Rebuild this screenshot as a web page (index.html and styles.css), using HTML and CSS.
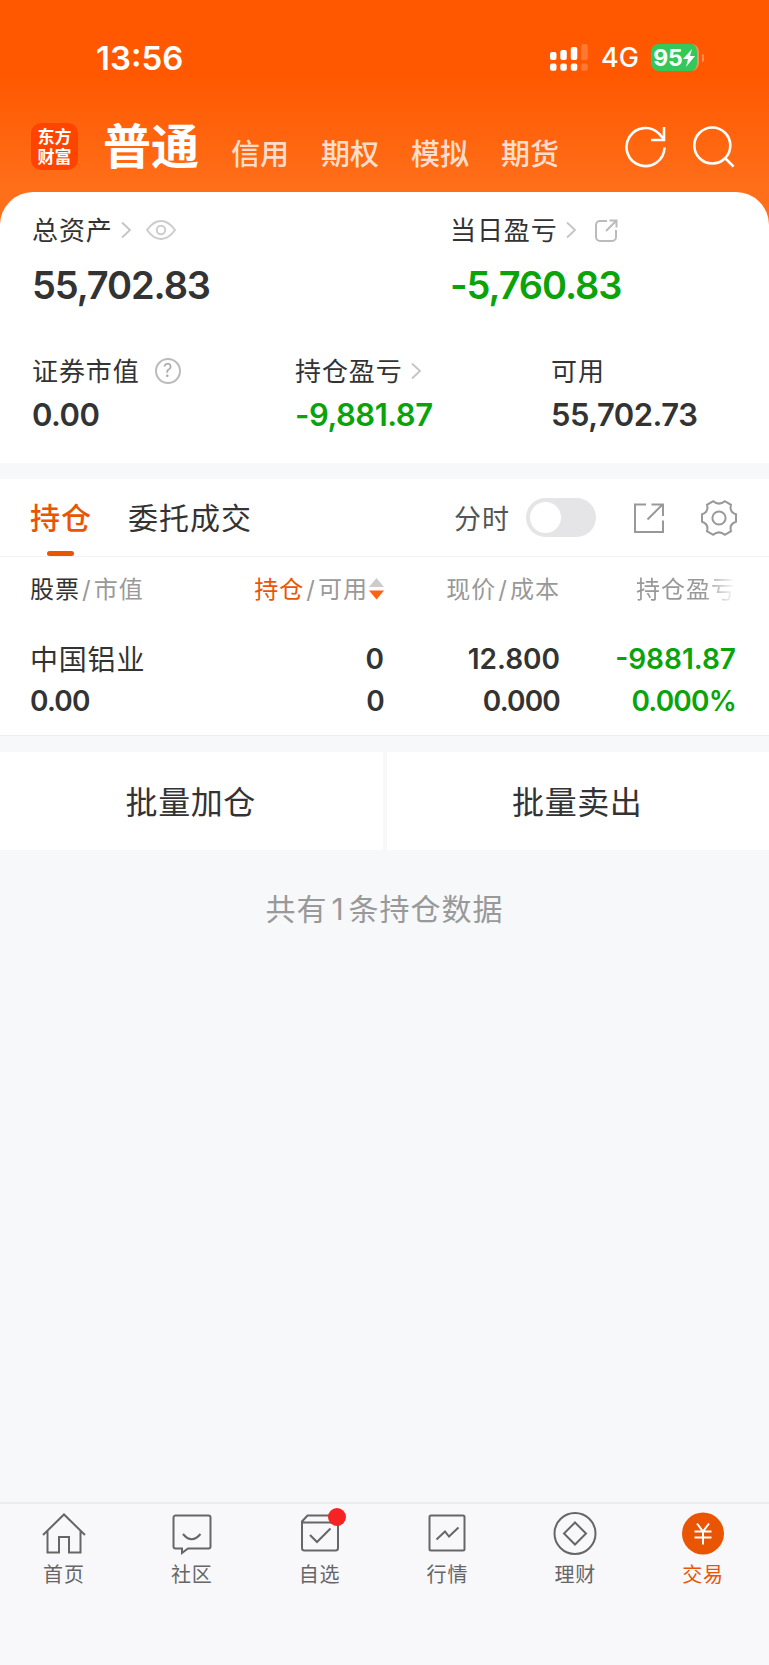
FILE: index.html
```html
<!DOCTYPE html>
<html lang="zh-CN">
<head>
  <meta charset="UTF-8" />
  <meta name="viewport" content="width=device-width, initial-scale=1.0" />
  <title>东方财富 - 交易</title>
  <link rel="stylesheet" href="styles.css">
</head>
<body>
  <header>
    <div class="status-bar">
      <span class="time">13:56</span>
      <div class="status-right">
        <svg class="signal" width="38" height="28" viewBox="0 0 38 28">
          <rect x="0" y="8" width="6.5" height="8" rx="2"/>
          <rect x="10.3" y="6" width="6.5" height="10" rx="2"/>
          <rect x="20.8" y="3" width="6.5" height="13" rx="2"/>
          <rect x="0" y="19.5" width="6.5" height="7.2" rx="2"/>
          <rect x="10.3" y="19.5" width="6.5" height="7.2" rx="2"/>
          <rect x="20.8" y="19.5" width="6.5" height="7.2" rx="2"/>
          <g opacity=".2">
            <rect x="31.2" y="0" width="6.5" height="16" rx="2"/>
            <rect x="31.2" y="19.5" width="6.5" height="7.2" rx="2"/>
          </g>
        </svg>
        <span class="network">4G</span>
        <div class="battery">
          <span>95</span>
          <svg width="12" height="18" viewBox="0 0 12 18"><path d="M9 0L0 10h5L3 18l9-11H7z" fill="#fff"/></svg>
        </div>
        <i class="battery-tip"></i>
      </div>
    </div>
    <div class="title-bar">
      <div class="logo"><span>东方</span><span>财富</span></div>
      <h1>普通</h1>
      <nav class="accounts">
        <a>信用</a>
        <a>期权</a>
        <a>模拟</a>
        <a>期货</a>
      </nav>
      <svg class="refresh" width="42" height="42" viewBox="0 0 42 42" stroke="#fff" stroke-width="2.6">
        <path d="M39.500 21.500A19 19 0 1 1 34.500 8.200L39 13.500"/>
        <path d="M39 1v13H26"/>
      </svg>
      <svg class="search" width="42" height="42" viewBox="0 0 42 42" stroke="#fff" stroke-width="2.6">
        <circle cx="19.300" cy="19.500" r="18"/>
        <path d="M32 32l8.600 8.600"/>
      </svg>
    </div>
  </header>

  <section class="assets">
    <div class="totals">
      <div class="item">
        <div class="label"><span>总资产</span>
          <svg class="arrow" width="11" height="18" viewBox="0 0 11 18"><path d="M1 1.500l8 7.500-8 7.500"/></svg>
          <svg class="eye" width="30" height="20" viewBox="0 0 30 20"><path d="M1 10C6 3 11 1 15 1s9 2 14 9c-5 7-10 9-14 9S6 17 1 10z"/><circle cx="15" cy="10" r="4.200"/></svg>
        </div>
        <div class="value">55,702.83</div>
      </div>
      <div class="item">
        <div class="label"><span>当日盈亏</span>
          <svg class="arrow" width="11" height="18" viewBox="0 0 11 18"><path d="M1 1.500l8 7.500-8 7.500"/></svg>
          <svg class="share" width="23" height="23" viewBox="0 0 23 23"><path d="M12 2H5a4 4 0 0 0-4 4v12a4 4 0 0 0 4 4h12a4 4 0 0 0 4-4v-7M11 12L21 2M14.500 1.500h7v7"/></svg>
        </div>
        <div class="value green">-5,760.83</div>
      </div>
    </div>
    <div class="details">
      <div class="item">
        <div class="label"><span>证券市值</span>
          <i class="help">?</i>
        </div>
        <div class="value">0.00</div>
      </div>
      <div class="item">
        <div class="label"><span>持仓盈亏</span>
          <svg class="arrow" width="11" height="18" viewBox="0 0 11 18"><path d="M1 1.500l8 7.500-8 7.500"/></svg>
        </div>
        <div class="value green">-9,881.87</div>
      </div>
      <div class="item">
        <div class="label"><span>可用</span></div>
        <div class="value">55,702.73</div>
      </div>
    </div>
  </section>

  <section class="positions">
    <div class="tabs">
      <a class="tab active">持仓</a>
      <a class="tab">委托成交</a>
      <span class="minute">分时</span>
      <span class="switch"></span>
      <svg class="export" width="30" height="30" viewBox="0 0 30 30"><path d="M12 1.500H1V29h28V17.500M13.500 16.500L28.500 1.500M17.500 1.500H29V13"/></svg>
      <svg class="gear" width="36" height="36" viewBox="0 0 36 36"><path d="M12.200 1.200Q18 6 23.800 1.200L30 4.800Q28 12 35 14.200V21.800Q28 24 30 31.200L23.800 34.800Q18 30 12.200 34.800L6 31.200Q8 24 1 21.800V14.200Q8 12 6 4.800Z"/><circle cx="18" cy="18" r="6.600"/></svg>
    </div>
    <div class="row head">
      <div><b>股票</b><i>/</i>市值</div>
      <div><b class="orange">持仓</b><i>/</i>可用<svg class="sort" width="15" height="22" viewBox="0 0 15 22"><path d="M7.500 0L15 9H0z" fill="#ccc"/><path d="M0 12.500h15L7.500 21.500z" fill="#fc6214"/></svg></div>
      <div>现价<i>/</i>成本</div>
      <div class="fade">持仓盈亏</div>
    </div>
    <div class="row">
      <div class="name">中国铝业</div>
      <div>0</div>
      <div>12.800</div>
      <div class="green">-9881.87</div>
    </div>
    <div class="row sub">
      <div>0.00</div>
      <div>0</div>
      <div>0.000</div>
      <div class="green">0.000%</div>
    </div>
  </section>

  <div class="batch">
    <button>批量加仓</button>
    <button>批量卖出</button>
  </div>
  <p class="count">共有<span>1</span>条持仓数据</p>

  <footer>
    <a>
      <svg width="44" height="44" viewBox="0 0 44 44"><path d="M1 23L22 2.500 43 23M5.500 19v21.500H17V25h10v15.500h11.500V19"/></svg>
      首页
    </a>
    <a>
      <svg width="44" height="44" viewBox="0 0 44 44"><path d="M5.500 3.500h33a2 2 0 0 1 2 2v29a2 2 0 0 1-2 2H18l-6 4.500v-4.500H5.500a2 2 0 0 1-2-2v-29a2 2 0 0 1 2-2M13 22q8.500 10.500 17.500 0"/></svg>
      社区
    </a>
    <a class="has-dot">
      <svg width="44" height="44" viewBox="0 0 44 44"><path d="M4 10.500h36V36a2.500 2.500 0 0 1-2.500 2.500h-31A2.500 2.500 0 0 1 4 36V9.500L9.500 3.500H40v7M12 23l7 7 13.500-13.500"/></svg>
      自选
    </a>
    <a>
      <svg width="44" height="44" viewBox="0 0 44 44"><rect x="4.500" y="3.500" width="35" height="35" rx="1.500"/><path d="M11.500 27.500l8.500-8 4 5 9.500-9"/></svg>
      行情
    </a>
    <a>
      <svg width="44" height="44" viewBox="0 0 44 44"><circle cx="22" cy="21.500" r="20.500"/><path d="M22 10.500l11 11-11 11-11-11z"/></svg>
      理财
    </a>
    <a class="active">
      <svg width="44" height="44" viewBox="0 0 44 44"><circle cx="22" cy="21.500" r="21" class="disc"/><path d="M16 11.500l6 8 6-8M22 19.500V32.500M13.500 19.500h17M13.500 25.500h17" class="yuan"/></svg>
      交易
    </a>
  </footer>
</body>
</html>
```
FILE: styles.css
```css
:root {
  --orange: #ea5504;
  --green: #0aa30a;
  --text: #333;
  --gray: #999;
  --bg: #f7f8fa;
}
* {
  margin: 0;
  padding: 0;
  box-sizing: border-box;
}
body {
  width: 769px;
  height: 1665px;
  display: flex;
  flex-direction: column;
  font-family: 'Inter', 'Noto Sans CJK SC', sans-serif;
  color: var(--text);
  background: var(--bg);
  overflow: hidden;
}
svg {
  flex: none;
  fill: none;
}
i {
  font-style: normal;
}
.green {
  color: var(--green);
}
.orange {
  color: var(--orange);
}

/* header */
header {
  height: 232px;
  flex: none;
  background: linear-gradient(#ff5800 0, #ff5800 75px, #ff6f1a 190px);
  color: #fff;
}
.status-bar {
  height: 115px;
  padding: 0 65px 0 96px;
  display: flex;
  align-items: center;
  justify-content: space-between;
}
.time {
  font-size: 33px;
  font-weight: 600;
}
.status-right {
  display: flex;
  align-items: center;
}
.signal {
  fill: #fff;
}
.network {
  font-size: 27px;
  font-weight: 500;
  margin: 0 12px 0 13px;
}
.battery {
  width: 48px;
  height: 27px;
  border-radius: 8px;
  background: #34c759;
  border-right: 2px solid #ff8d55;
  display: flex;
  align-items: center;
  justify-content: center;
  font-size: 23px;
  font-weight: 700;
}
.battery-tip {
  width: 2px;
  height: 8px;
  margin-left: 3px;
  border-radius: 0 2px 2px 0;
  background: #ff8d55;
}
.title-bar {
  height: 64px;
  padding: 0 34px 0 31px;
  display: flex;
  align-items: center;
}
.logo {
  width: 47px;
  height: 47px;
  margin-top: -1px;
  padding-top: 3px;
  border-radius: 10px;
  background: #ff4400;
  display: flex;
  flex-direction: column;
  font-family: 'Noto Sans CJK SC', sans-serif;
  font-size: 17px;
  font-weight: 700;
  line-height: 20px;
  text-align: center;
}
h1 {
  margin-left: 25px;
  font-size: 48px;
  font-weight: 700;
  line-height: 64px;
}
.accounts {
  flex: 1;
  display: flex;
  gap: 32px;
  margin-left: 32px;
  padding-top: 16px;
  font-size: 29px;
  font-weight: 500;
  line-height: 40px;
  color: rgba(255, 255, 255, 0.8);
}
.search {
  margin-left: 26px;
}

/* assets */
.assets {
  height: 271px;
  flex: none;
  margin-top: -40px;
  padding: 20px 32px 0;
  border-radius: 33px 33px 0 0;
  background: #fff;
}
.totals {
  display: grid;
  grid-template-columns: 418px 1fr;
}
.details {
  display: grid;
  grid-template-columns: 263px 256px 1fr;
  margin-top: 47px;
}
.label {
  height: 36px;
  display: flex;
  align-items: center;
  font-size: 26px;
  letter-spacing: 0.9px;
}
.label span {
  padding-bottom: 3px;
}
.totals .value {
  height: 58px;
  line-height: 74px;
  font-size: 38px;
  font-weight: 600;
  letter-spacing: -1.1px;
}
.details .value {
  line-height: 52px;
  font-size: 31px;
  font-weight: 600;
  letter-spacing: -0.5px;
}
.arrow {
  margin-left: 8px;
  stroke: #c4c4c4;
  stroke-width: 1.8;
}
.eye {
  margin-left: 14px;
  stroke: #ccc;
  stroke-width: 2;
}
.share {
  margin-left: 18px;
  stroke: #bbb;
  stroke-width: 2;
}
.help {
  width: 26px;
  height: 26px;
  margin-left: 15px;
  border: 2px solid #bbb;
  border-radius: 50%;
  font-size: 18px;
  line-height: 22px;
  letter-spacing: 0;
  text-align: center;
  color: #aaa;
}

/* positions */
.positions {
  height: 257px;
  flex: none;
  margin-top: 16px;
  background: #fff;
  border-bottom: 1px solid #eee;
}
.tabs {
  height: 78px;
  padding: 0 32px 0 30px;
  display: flex;
  align-items: center;
  border-bottom: 1px solid #f2f2f2;
}
.tab {
  height: 78px;
  line-height: 78px;
  font-size: 30px;
  letter-spacing: 1px;
  margin-right: 36px;
}
.tab.active {
  position: relative;
  font-weight: 500;
  color: var(--orange);
}
.tab.active::after {
  content: '';
  position: absolute;
  left: 17px;
  bottom: 1px;
  width: 27px;
  height: 5px;
  border-radius: 3px;
  background: var(--orange);
}
.minute {
  margin-left: auto;
  font-size: 27px;
  letter-spacing: 1px;
  color: #555;
}
.switch {
  width: 70px;
  height: 39px;
  margin: 0 38px 0 16px;
  padding: 4px;
  border-radius: 20px;
  background: #e5e5e7;
}
.switch::before {
  content: '';
  display: block;
  width: 31px;
  height: 31px;
  border-radius: 50%;
  background: #fff;
}
.export, .gear {
  stroke: var(--gray);
  stroke-width: 2;
}
.gear {
  margin-left: 37px;
}
.row {
  height: 42px;
  padding: 0 33px 0 30px;
  display: grid;
  grid-template-columns: 176px 178px 176px 176px;
  align-items: center;
  text-align: right;
  font-size: 28px;
  font-weight: 600;
}
.row div:first-child {
  text-align: left;
}
.row.sub {
  letter-spacing: -0.8px;
}
.row .name {
  padding-bottom: 2px;
  font-weight: 400;
  letter-spacing: 0.8px;
}
.row.head {
  height: 81px;
  padding-bottom: 20px;
  font-size: 24px;
  font-weight: 400;
  letter-spacing: 1px;
  color: var(--gray);
}
.head b {
  font-weight: 400;
  color: var(--text);
}
.head b.orange {
  color: var(--orange);
}
.head i {
  margin: 0 2px;
}
.sort {
  margin-left: 1px;
  vertical-align: -2px;
}
.fade {
  -webkit-mask-image: linear-gradient(to left, transparent, #000 32px);
  mask-image: linear-gradient(to left, transparent, #000 32px);
}

/* batch buttons */
.batch {
  display: grid;
  grid-template-columns: 1fr 1fr;
  gap: 4px;
  margin-top: 16px;
}
.batch button {
  height: 98px;
  padding: 0 1px 2px 0;
  border: none;
  background: #fff;
  font-family: inherit;
  font-size: 32px;
  letter-spacing: 0.6px;
  color: var(--text);
}
.count {
  margin-top: 35px;
  line-height: 48px;
  font-size: 30px;
  letter-spacing: 1px;
  text-align: center;
  color: var(--gray);
}
.count span {
  margin: 0 4px;
}

/* bottom nav */
footer {
  height: 163px;
  flex: none;
  margin-top: auto;
  padding: 8px 2px 0 0;
  display: flex;
  border-top: 2px solid #ebecee;
  background: #f8f8fb;
}
footer a {
  flex: 1;
  display: flex;
  flex-direction: column;
  align-items: center;
  font-size: 20px;
  line-height: 36px;
  letter-spacing: 0.8px;
  color: #666;
}
footer svg {
  margin-bottom: 1px;
  stroke: #666;
  stroke-width: 2;
}
footer .active {
  color: var(--orange);
}
.disc {
  fill: var(--orange);
  stroke: none;
}
.yuan {
  stroke: #fff;
}
.has-dot {
  position: relative;
}
.has-dot::after {
  content: '';
  position: absolute;
  top: -4px;
  left: 72px;
  width: 18px;
  height: 18px;
  border-radius: 50%;
  background: #f52323;
}
```
